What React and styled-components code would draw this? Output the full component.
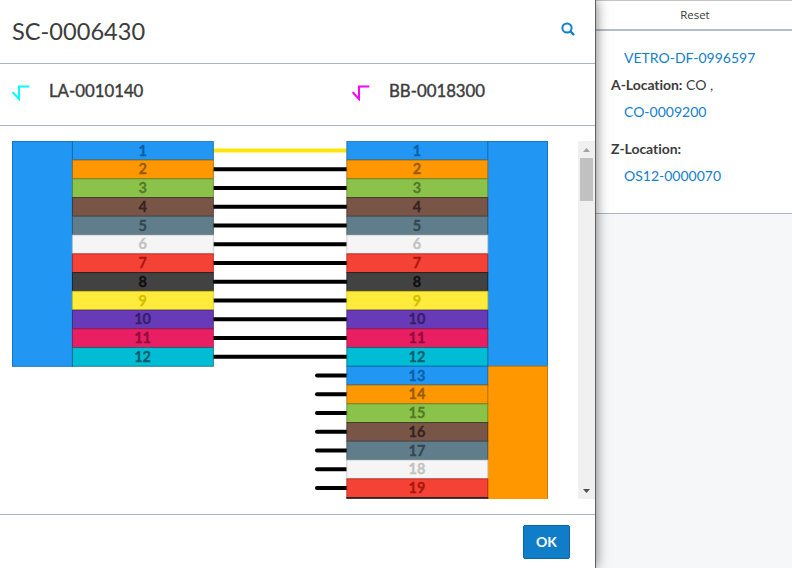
import React from "react";
import styled, { createGlobalStyle } from "styled-components";

const GlobalStyle = createGlobalStyle`
  * { box-sizing: border-box; }
  body { margin: 0; background: #f6f7f9; }
`;

const Page = styled.div`
  display: flex;
  width: 792px;
  height: 568px;
  overflow: hidden;
  background: #f6f7f9;
  color: #3c3c3c;
  font-family: Lato, "Open Sans", sans-serif;
`;

const Dialog = styled.section`
  display: flex;
  flex-direction: column;
  flex: none;
  width: 596px;
  height: 568px;
  background: #fff;
  border-right: 1px solid #5f6164;
  box-shadow: 0 0 12px rgba(0, 0, 0, 0.55);
  z-index: 1;
`;

const Header = styled.header`
  display: flex;
  align-items: center;
  justify-content: space-between;
  height: 64px;
  padding: 0 20px 2px 12px;
  border-bottom: 1px solid #abb7c6;
`;

const Title = styled.h1`
  margin: 0;
  font-size: 23.6px;
  line-height: 30px;
  font-weight: 400;
`;

const SearchButton = styled.button`
  display: flex;
  margin: 0 0 3px;
  padding: 0;
  border: 0;
  background: none;
  color: #1280c9;
`;

const CableBar = styled.div`
  display: grid;
  grid-template-columns: 340px 1fr;
  height: 62px;
  padding: 0 0 9px 12px;
  border-bottom: 1px solid #abb7c6;
`;

const Cable = styled.div`
  display: flex;
  align-items: center;
  gap: 19px;
  font-size: 16.8px;
  font-weight: 400;
  -webkit-text-stroke: 0.4px #3c3c3c;

  svg { margin-top: 5px; }
`;

const Body = styled.div`
  display: flex;
  justify-content: space-between;
  flex: none;
  height: 358px;
  margin-top: 15px;
  padding-left: 12px;
`;

const Diagram = styled.svg`
  display: block;
  width: 536px;
  height: 358px;
`;

const FiberLabel = styled.text`
  font: 700 14.5px Lato, sans-serif;
  text-anchor: middle;
  stroke: currentColor;
  stroke-width: 0.3px;
`;

const ScrollTrack = styled.div`
  display: flex;
  flex-direction: column;
  align-items: center;
  width: 17px;
  background: #f0f0f0;
`;

const ScrollArrow = styled.div`
  display: flex;
  align-items: center;
  justify-content: center;
  height: 17px;
  color: ${(p) => p.$color};
  ${(p) => p.$end && "margin-top: auto;"}
`;

const ScrollThumb = styled.div`
  width: 13px;
  height: 43px;
  background: #c1c1c1;
`;

const Footer = styled.footer`
  display: flex;
  justify-content: flex-end;
  height: 54px;
  margin-top: 15px;
  padding: 10px 25px 0 0;
  border-top: 1px solid #abb7c6;
`;

const OkButton = styled.button`
  width: 47px;
  height: 34px;
  padding: 0 0 2px;
  border: 1px solid #0d65a3;
  border-radius: 2px;
  background: #0f7dc7;
  color: #fff;
  font: 700 14px Lato, sans-serif;
`;

const Side = styled.aside`
  flex: 1;
`;

const ResetButton = styled.button`
  display: block;
  width: 100%;
  height: 31px;
  padding: 0 0 1px 2px;
  border: 0;
  border-top: 1px solid #c5c6c9;
  border-bottom: 2px solid #b5bccb;
  background: #fff;
  color: #3a3a3a;
  font: 400 11.4px "Open Sans", sans-serif;
`;

const Details = styled.div`
  height: 183px;
  padding: 13px 0 0 15px;
  border-bottom: 1px solid #abb7c6;
  background: #fff;
  font-size: 14px;
  line-height: 27px;
`;

const Line = styled.div`
  margin-top: ${(p) => (p.$spaced ? "10px" : "0")};
  white-space: nowrap;

  b { font-weight: 700; letter-spacing: -0.05px; }
`;

const Link = styled.a`
  display: block;
  padding-left: 13px;
  color: #1280c9;
`;

const palette = [
  ["#2196f3", "#0960a5"],
  ["#ff9800", "#995b00"],
  ["#8bc34a", "#537a26"],
  ["#795548", "#35241e"],
  ["#607d8b", "#344650"],
  ["#f5f5f5", "#c2c2c2"],
  ["#f44336", "#ab160b"],
  ["#424242", "#0f0f0f"],
  ["#ffeb3b", "#d4bd00"],
  ["#673ab7", "#371e66"],
  ["#e91e63", "#8f0e3a"],
  ["#00bcd4", "#005f6b"],
];

const PITCH = 18.75;
const VISIBLE_LABELS = 19;

function Fiber({ x, index }) {
  const [fill, ink] = palette[index % 12];
  const y = 0.3 + index * PITCH;
  return (
    <g>
      <rect x={x} y={y} width="141" height={PITCH} fill={fill} stroke={ink} strokeOpacity="0.7" />
      {index < VISIBLE_LABELS && (
        <FiberLabel x={x + 70.2} y={y + 14.4} fill={ink} color={ink}>{index + 1}</FiberLabel>
      )}
    </g>
  );
}

function SpliceDiagram() {
  const left = Array.from({ length: 12 }, (_, i) => i);
  const right = Array.from({ length: 20 }, (_, i) => i);
  return (
    <Diagram viewBox="0 0 536 358">
      <rect x="0.5" y="0.5" width="60" height="224.8" fill="#2196f3" stroke="#1478c8" />
      <rect x="475.5" y="0.5" width="60" height="224.8" fill="#2196f3" stroke="#1478c8" />
      <rect x="475.5" y="225.3" width="60" height="225" fill="#ff9800" stroke="#cc7a00" />
      {right.map((i) => (
        <line
          key={i}
          x1={i < 12 ? 201 : 305}
          x2="335"
          y1={9.4 + i * PITCH}
          y2={9.4 + i * PITCH}
          stroke={i === 0 ? "#ffe60a" : "#000"}
          strokeWidth="4"
          strokeLinecap={i < 12 ? "butt" : "round"}
        />
      ))}
      {left.map((i) => <Fiber key={i} x={60.4} index={i} />)}
      {right.map((i) => <Fiber key={i} x={334.8} index={i} />)}
    </Diagram>
  );
}

function RootIcon({ color }) {
  return (
    <svg width="18" height="17" viewBox="0 0 18 17" fill="none" stroke={color} strokeWidth="2">
      <path d="M0.7 8.2 L7 15 V2.5 H17.3" />
    </svg>
  );
}

export default function App() {
  return (
    <Page>
      <GlobalStyle />
      <Dialog>
        <Header>
          <Title>SC-0006430</Title>
          <SearchButton aria-label="Search">
            <svg width="14" height="14" viewBox="0 0 14 14" fill="none" stroke="currentColor" strokeWidth="2">
              <circle cx="6" cy="6" r="4.6" />
              <path d="M9.2 9.2 L13 13" strokeWidth="2.4" />
            </svg>
          </SearchButton>
        </Header>
        <CableBar>
          <Cable><RootIcon color="#00ffff" />LA-0010140</Cable>
          <Cable><RootIcon color="#ff00ff" />BB-0018300</Cable>
        </CableBar>
        <Body>
          <SpliceDiagram />
          <ScrollTrack>
            <ScrollArrow $color="#a3a3a3">
              <svg width="7" height="4" viewBox="0 0 7 4"><path d="M0 4 L3.5 0 L7 4Z" fill="currentColor" /></svg>
            </ScrollArrow>
            <ScrollThumb />
            <ScrollArrow $color="#505050" $end>
              <svg width="7" height="4" viewBox="0 0 7 4"><path d="M0 0 L3.5 4 L7 0Z" fill="currentColor" /></svg>
            </ScrollArrow>
          </ScrollTrack>
        </Body>
        <Footer>
          <OkButton>OK</OkButton>
        </Footer>
      </Dialog>
      <Side>
        <ResetButton>Reset</ResetButton>
        <Details>
          <Link>VETRO-DF-0996597</Link>
          <Line><b>A-Location:</b> CO ,</Line>
          <Link>CO-0009200</Link>
          <Line $spaced><b>Z-Location:</b></Line>
          <Link>OS12-0000070</Link>
        </Details>
      </Side>
    </Page>
  );
}
